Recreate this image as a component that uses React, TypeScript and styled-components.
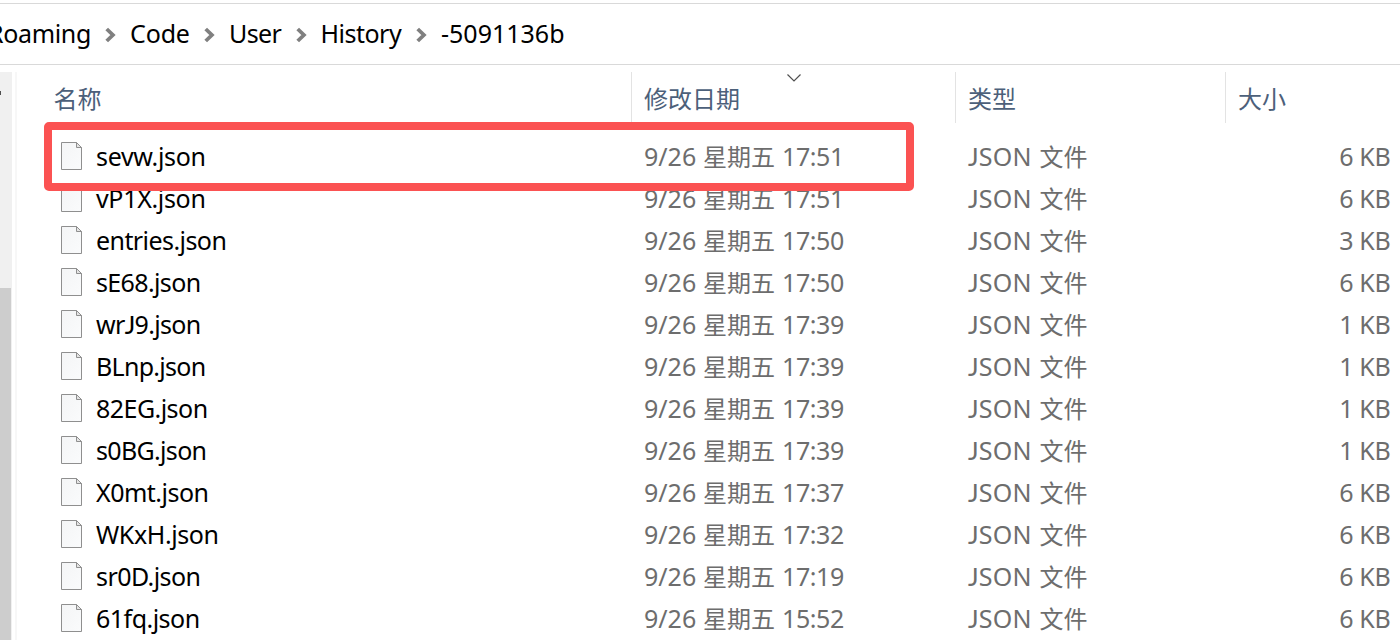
import React from "react";
import styled, { createGlobalStyle } from "styled-components";

const GlobalStyle = createGlobalStyle`
  * { box-sizing: border-box; }
  body {
    margin: 0;
    overflow: hidden;
    background: #fff;
    color: #000;
    font-family: "Noto Sans", "Noto Sans CJK SC", sans-serif;
    font-size: 25px;
  }
`;

const Window = styled.div`
  width: 1400px;
  height: 640px;
  padding-top: 3px;
  overflow: hidden;
  display: flex;
  flex-direction: column;
`;

const AddressBar = styled.nav`
  flex: none;
  height: 62px;
  border-top: 1px solid #d9d9d9;
  border-bottom: 1px solid #d9d9d9;
  display: flex;
  align-items: center;
  padding-bottom: 2px;
  overflow: hidden;
`;

const Crumb = styled.span<{ $width: number; $spacing?: number; $shift?: number }>`
  flex: none;
  width: ${(p) => p.$width}px;
  margin-left: ${(p) => p.$shift ?? 0}px;
  letter-spacing: ${(p) => p.$spacing ?? 0}px;
  white-space: nowrap;
`;

const Separator = styled.svg`
  flex: none;
  width: 12px;
  height: 16px;
  margin-top: 3px;
  margin-right: 13px;
`;

const Body = styled.div`
  flex: 1;
  min-height: 0;
  padding-top: 7px;
  display: flex;
`;

const Scrollbar = styled.div`
  width: 12px;
  background: #f0f0f0;
  display: flex;
  flex-direction: column;
`;

const ScrollArrow = styled.div`
  width: 1px;
  height: 4px;
  margin: 19px 0 193px;
  background: #505050;
`;

const ScrollThumb = styled.div`
  width: 11px;
  flex: 1;
  background: #cdcdcd;
`;

const Divider = styled.div`
  width: 2px;
  margin-left: 3px;
  background: #f7f7f7;
`;

const List = styled.main`
  position: relative;
  flex: 1;
  padding-left: 27px;
`;

const columns = "587px 324px 270px 1fr";

const Header = styled.div`
  display: grid;
  grid-template-columns: ${columns};
  height: 51px;
  margin-bottom: 12px;
`;

const HeaderCell = styled.div<{ $first?: boolean }>`
  position: relative;
  height: 51px;
  padding-left: ${(p) => (p.$first ? 9.5 : 12)}px;
  border-left: ${(p) => (p.$first ? "0" : "1px solid #e3e3e3")};
  color: #4c607a;
  font-family: "Noto Sans CJK SC", sans-serif;
  font-size: 24px;
  line-height: 51px;
`;

const SortCaret = styled.svg`
  position: absolute;
  left: 153.5px;
  top: 1px;
  width: 16px;
  height: 9px;
`;

const Row = styled.div`
  display: grid;
  grid-template-columns: ${columns};
  grid-template-rows: 42px;
  height: 42px;
  line-height: 42px;
  white-space: nowrap;
`;

const NameCell = styled.div`
  display: flex;
  align-items: center;
  padding-left: 17px;
`;

const FileName = styled.span<{ $spacing: number }>`
  margin-left: 14px;
  letter-spacing: ${(p) => p.$spacing}px;
`;

const Cell = styled.div`
  display: flex;
  padding-left: 13px;
  color: #6d6d6d;
`;

const SizeCell = styled(Cell)`
  justify-content: flex-end;
  padding-right: 9.5px;
  letter-spacing: -0.3px;
`;

const Day = styled.span`
  width: 59px;
`;

const Time = styled.span`
  margin-left: 7px;
  letter-spacing: -0.4px;
`;

const Kind = styled.span`
  width: 71.5px;
  letter-spacing: 0.2px;
`;

const Han = styled.span`
  padding-top: 1px;
  font-size: 24px;
`;

const UprightJ = styled.span`
  font-family: Lato, sans-serif;
`;

const Highlight = styled.div`
  position: absolute;
  left: 27px;
  top: 50px;
  width: 870px;
  height: 69px;
  border: 8px solid #fb5252;
  border-radius: 5px;
`;

const PageSvg = styled.svg`
  flex: none;
  width: 21px;
  height: 28px;
`;

const FileIcon = () => (
  <PageSvg viewBox="0 0 21 28">
    <defs>
      <linearGradient id="sheet" x1="0" y1="0" x2="1" y2="1">
        <stop offset="0" stopColor="#f4f5f6" />
        <stop offset="1" stopColor="#fafbfc" />
      </linearGradient>
    </defs>
    <path d="M.5 .5H15.5L20.5 5.5V27.5H.5Z" fill="url(#sheet)" stroke="#8f8f8f" />
    <path d="M15.5 .5V5.5H20.5Z" fill="#e4e4e4" stroke="#8f8f8f" />
  </PageSvg>
);

const Chevron = () => (
  <Separator viewBox="0 0 12 16">
    <path d="M1.7 2L7.9 8L1.7 14" fill="none" stroke="#808080" strokeWidth="3.8" />
  </Separator>
);

const withUprightJ = (text: string) =>
  text.split(/(J)/).map((part, i) => (part === "J" ? <UprightJ key={i}>J</UprightJ> : part));

type Entry = { name: string; time: string; size: string; spacing: number };

const entries: Entry[] = [
  { name: "sevw.json", time: "17:51", size: "6 KB", spacing: -0.34 },
  { name: "vP1X.json", time: "17:51", size: "6 KB", spacing: -0.33 },
  { name: "entries.json", time: "17:50", size: "3 KB", spacing: -0.57 },
  { name: "sE68.json", time: "17:50", size: "6 KB", spacing: -0.63 },
  { name: "wrJ9.json", time: "17:39", size: "1 KB", spacing: -0.68 },
  { name: "BLnp.json", time: "17:39", size: "1 KB", spacing: -0.72 },
  { name: "82EG.json", time: "17:39", size: "1 KB", spacing: -0.54 },
  { name: "s0BG.json", time: "17:39", size: "1 KB", spacing: -0.67 },
  { name: "X0mt.json", time: "17:37", size: "6 KB", spacing: -0.5 },
  { name: "WKxH.json", time: "17:32", size: "6 KB", spacing: -0.39 },
  { name: "sr0D.json", time: "17:19", size: "6 KB", spacing: -0.57 },
  { name: "61fq.json", time: "15:52", size: "6 KB", spacing: -0.52 },
];

export default function App() {
  return (
    <>
      <GlobalStyle />
      <Window>
        <AddressBar>
          <Crumb $width={117} $spacing={-0.35} $shift={-12}>Roaming</Crumb>
          <Chevron />
          <Crumb $width={74} $spacing={-0.15}>Code</Crumb>
          <Chevron />
          <Crumb $width={66.5} $spacing={-0.6}>User</Crumb>
          <Chevron />
          <Crumb $width={95.5} $spacing={-0.5}>History</Crumb>
          <Chevron />
          <Crumb $width={140}>-5091136b</Crumb>
        </AddressBar>
        <Body>
          <Scrollbar>
            <ScrollArrow />
            <ScrollThumb />
          </Scrollbar>
          <Divider />
          <List>
            <Header>
              <HeaderCell $first>名称</HeaderCell>
              <HeaderCell>
                修改日期
                <SortCaret viewBox="0 0 16 9">
                  <path d="M1.5 1.5L8 8L14.5 1.5" fill="none" stroke="#505050" strokeWidth="1.2" />
                </SortCaret>
              </HeaderCell>
              <HeaderCell>类型</HeaderCell>
              <HeaderCell>大小</HeaderCell>
            </Header>
            {entries.map((e) => (
              <Row key={e.name}>
                <NameCell>
                  <FileIcon />
                  <FileName $spacing={e.spacing}>{withUprightJ(e.name)}</FileName>
                </NameCell>
                <Cell>
                  <Day>9/26</Day>
                  <Han>星期五</Han>
                  <Time>{e.time}</Time>
                </Cell>
                <Cell>
                  <Kind>{withUprightJ("JSON")}</Kind>
                  <Han>文件</Han>
                </Cell>
                <SizeCell>{e.size}</SizeCell>
              </Row>
            ))}
            <Highlight />
          </List>
        </Body>
      </Window>
    </>
  );
}
